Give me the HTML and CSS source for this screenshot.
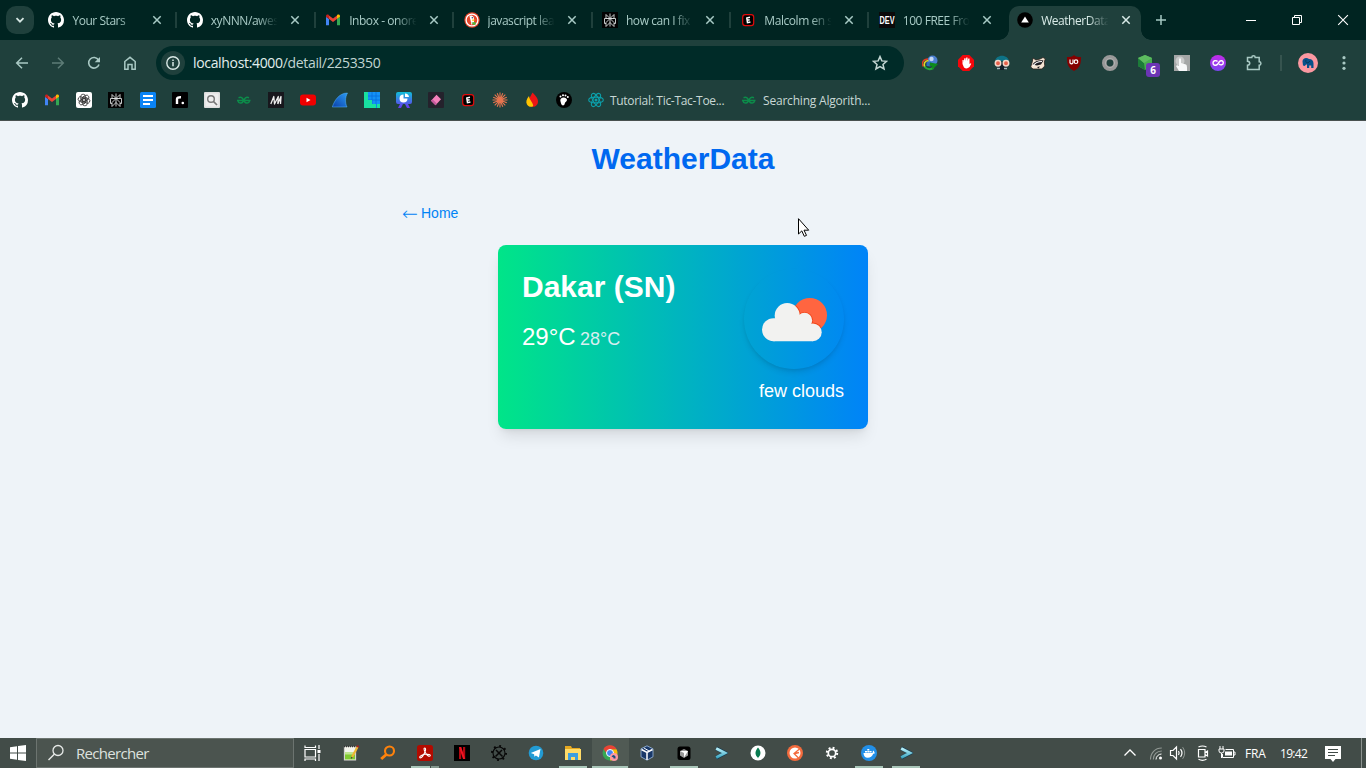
FILE: index.html
```html
<!DOCTYPE html>
<html lang="en">
<head>
<meta charset="utf-8">
<title>WeatherData</title>
<link rel="stylesheet" href="styles.css">
</head>
<body>
<svg class="defs" width="0" height="0">
  <defs>
    <linearGradient id="fin" x1="0" y1="1" x2="1" y2="0"><stop offset="0" stop-color="#0a3fa8"/><stop offset="1" stop-color="#2b9bf5"/></linearGradient>
    <linearGradient id="pie" x1="0" y1="0" x2="0" y2="1"><stop offset="0" stop-color="#10bfd8"/><stop offset="1" stop-color="#6a35f2"/></linearGradient>
    <linearGradient id="loop" x1="0" y1="0" x2="0" y2="1"><stop offset="0" stop-color="#c22be8"/><stop offset="1" stop-color="#7a46f0"/></linearGradient>
    <linearGradient id="prompt" x1="0" y1="0" x2="0" y2="1"><stop offset="0" stop-color="#b8f0fa"/><stop offset="1" stop-color="#3fa9c4"/></linearGradient>
  </defs>
  <symbol id="github" viewBox="0 0 16 16"><path fill="#fff" d="M8 0C3.58 0 0 3.58 0 8c0 3.54 2.29 6.53 5.47 7.59.4.07.55-.17.55-.38 0-.19-.01-.82-.01-1.49-2.01.37-2.53-.49-2.69-.94-.09-.23-.48-.94-.82-1.13-.28-.15-.68-.52-.01-.53.63-.01 1.08.58 1.23.82.72 1.21 1.87.87 2.33.66.07-.52.28-.87.51-1.07-1.78-.2-3.64-.89-3.64-3.95 0-.87.31-1.59.82-2.15-.08-.2-.36-1.02.08-2.12 0 0 .67-.21 2.2.82.64-.18 1.32-.27 2-.27s1.36.09 2 .27c1.53-1.04 2.2-.82 2.2-.82.44 1.1.16 1.92.08 2.12.51.56.82 1.27.82 2.15 0 3.07-1.87 3.75-3.65 3.95.29.25.54.73.54 1.48 0 1.07-.01 1.93-.01 2.2 0 .21.15.46.55.38A8.01 8.01 0 0 0 16 8c0-4.42-3.58-8-8-8z"/></symbol>
  <symbol id="gmail" viewBox="0 0 16 16"><path fill="#4285f4" d="M1 13.300h3V7L1 4.800z"/><path fill="#34a853" d="M12 13.300h3V4.800L12 7z"/><path fill="#ea4335" d="M4 7V3.500l4 3 4-3V7l-4 3z"/><path fill="#c5221f" d="M1 4.800V4c0-1.400 1.500-2 2.600-1.200l.4.400V7z"/><path fill="#fbbc04" d="M15 4.800V4c0-1.400-1.500-2-2.600-1.200l-.4.400V7z"/></symbol>
  <symbol id="perplex" viewBox="0 0 16 16"><path fill="#030303" d="M0 0h16v16H0z"/><path fill="none" stroke="#d9dcdc" stroke-width=".9" d="M8 1.500v13M4 2.500l4 4 4-4v4H4zM2.500 6.500h11v5H12M2.500 6.500v5H4M8 6.500l-4 4v4l4-4 4 4v-4z"/></symbol>
  <symbol id="duck" viewBox="0 0 16 16"><circle cx="8" cy="8" r="7.700" fill="#e5452a"/><circle cx="8" cy="8" r="5.900" fill="none" stroke="#fff" stroke-width="1.300"/><path fill="#fff" d="M5.500 4c2-1.500 4.500 0 4.500 3v3l-2.500 3-.8-4z"/><path fill="#fdc30a" d="M8 7.500l4 .3-3.500 1.500z"/><path fill="#4cba3c" d="M7.500 10.500l4-.5v3l-2.500-.5z"/><circle cx="8.300" cy="5.700" r=".7" fill="#24405f"/></symbol>
  <symbol id="esport" viewBox="0 0 16 16"><rect x="2.700" y="2.700" width="11" height="11" rx="2.600" fill="#000" stroke="#e00b0b" stroke-width="1.200"/><path fill="none" stroke="#fff" stroke-width="1.500" d="M10 5.300L6.800 6l.7 4.700 2.900-.6M7.200 8.300l2.500-.5"/></symbol>
  <symbol id="vercel" viewBox="0 0 16 16"><circle cx="8" cy="8" r="7.800" fill="#000"/><path fill="#fff" d="M8 4.500l3.800 6H4.200z"/></symbol>
  <symbol id="close" viewBox="0 0 16 16"><path fill="none" stroke="currentColor" stroke-width="1.500" d="M4.300 4.300l7.400 7.400m0-7.400l-7.400 7.400"/></symbol>
  <symbol id="openai" viewBox="0 0 16 16"><rect width="16" height="16" rx="2" fill="#fff"/><g fill="none" stroke="#333" stroke-width=".8"><rect x="4.800" y="2.200" width="4.600" height="8" rx="2.200"/><rect x="4.800" y="2.200" width="4.600" height="8" rx="2.200" transform="rotate(60 8 8)"/><rect x="4.800" y="2.200" width="4.600" height="8" rx="2.200" transform="rotate(120 8 8)"/><rect x="4.800" y="2.200" width="4.600" height="8" rx="2.200" transform="rotate(180 8 8)"/><rect x="4.800" y="2.200" width="4.600" height="8" rx="2.200" transform="rotate(240 8 8)"/><rect x="4.800" y="2.200" width="4.600" height="8" rx="2.200" transform="rotate(300 8 8)"/></g></symbol>
  <symbol id="doc" viewBox="0 0 16 16"><rect width="16" height="16" rx="1.500" fill="#0a84f5"/><path stroke="#fff" stroke-width="2" d="M3 4h10M3 8h10M3 12h7"/></symbol>
  <symbol id="rdot" viewBox="0 0 16 16"><rect width="16" height="16" rx="1" fill="#000"/><path fill="none" stroke="#fff" stroke-width="2.400" d="M5 12V7q0-2 4-1.800"/><circle cx="10.800" cy="11" r="1.300" fill="#fff"/></symbol>
  <symbol id="magnify" viewBox="0 0 16 16"><rect width="16" height="16" rx="1" fill="#dedede"/><rect x="1.500" y="1.500" width="13" height="13" fill="#eee"/><circle cx="7" cy="7" r="3.300" fill="none" stroke="#777" stroke-width="1.400"/><path stroke="#777" stroke-width="1.700" d="M9.500 9.500l3.500 3.500"/></symbol>
  <symbol id="gfg" viewBox="0 0 16 16"><path fill="none" stroke="#0c8c4a" stroke-width="1.500" d="M1 8.500h13.500M2.500 5.700c3-1 4.700.5 4.700 2.500 0 3.500-4.700 3.800-5.200.8M13 5.700c-3-1-4.700.5-4.700 2.500 0 3.500 4.700 3.800 5.200.8"/></symbol>
  <symbol id="mono" viewBox="0 0 16 16"><path fill="#17171d" d="M0 0h16v16H0z"/><path fill="none" stroke="#eee" stroke-width="1.300" stroke-linejoin="round" d="M2.800 12L5.800 4.500 6.500 12l3.800-7.500L9.800 12M9.800 12l3.200-7.500-.5 7.500"/></symbol>
  <symbol id="youtube" viewBox="0 0 16 16"><rect y="2.500" width="16" height="11" rx="3" fill="#f00000"/><path fill="#fff" d="M6.500 5.700v4.600l4-2.300z"/></symbol>
  <symbol id="shark" viewBox="0 0 16 16"><path fill="url(#fin)" stroke="#55b6ff" stroke-width=".5" d="M.3 15C2.500 8.500 7 1 15.500 1c-2.500 4.500-2.500 10-.5 14z"/></symbol>
  <symbol id="mosaic" viewBox="0 0 16 16"><path fill="#1492f5" d="M0 0h16v16H0z"/><path stroke="#056ddd" stroke-width=".8" d="M8 0v16M12 0v16M4 4h12M4 8h12"/><path fill="#18e0a0" d="M0 0h4v8h4v4h4v4H0zM13 12h3v4h-3z"/></symbol>
  <symbol id="piechart" viewBox="0 0 16 16"><path fill="url(#pie)" d="M2 0h12q2 0 2 2v8q0 2-2 2h-2l2 4h-3l-2-4H7l-2 4H2l2-4H2q-2 0-2-2V2q0-2 2-2z"/><path fill="#fff" d="M7.500 2.500v4h4a4 4 0 1 1-4-4zM9 1.500a4 4 0 0 1 4 3.500H9z"/></symbol>
  <symbol id="pinkbox" viewBox="0 0 16 16"><rect width="16" height="16" rx="1" fill="#24222c"/><path fill="#f480bb" d="M8.500 2.700L13 7.300 7.500 13.200 3 8.700z"/><path fill="#c4599c" d="M3 8.700l1.500-1.500 4.500 4.500-1.500 1.500z"/></symbol>
  <symbol id="claude" viewBox="0 0 16 16"><path stroke="#e8754f" stroke-width="1.100" d="M8 .5v15M.5 8h15M2.700 2.700l10.600 10.600M13.300 2.700L2.700 13.300M5.200 1.200l5.600 13.600M1.200 5.200l13.600 5.600M10.800 1.200L5.200 14.800M1.200 10.800l13.600-5.600"/></symbol>
  <symbol id="flame" viewBox="0 0 16 16"><path fill="#ed1515" d="M8.500.5C12 4 14 6.500 14 9.500c0 4-3.500 6-6.500 5L5 7z"/><path fill="#ffc400" d="M5 4C2.500 7 1.500 10 3 12.500s4.500 3 6.200 1.500C9 10 5.500 8.500 5 4z"/></symbol>
  <symbol id="foot" viewBox="0 0 16 16"><circle cx="8" cy="8" r="8" fill="#000"/><path fill="#fff" d="M5 6.500c2-2 6-1 6 1.300 0 2-2 2-2.300 4-.4 2.200-3.200 2.200-3.700-.5-.3-1.800-1.400-3.200 0-4.800z"/><g fill="#fff"><circle cx="4.500" cy="4.500" r="1"/><circle cx="7" cy="3.300" r="1"/><circle cx="9.500" cy="3.500" r="1"/><circle cx="11.800" cy="5" r="1"/></g></symbol>
  <symbol id="react" viewBox="0 0 16 16"><g fill="none" stroke="#0c9faa" stroke-width="1.100"><ellipse cx="8" cy="8" rx="7.300" ry="2.900"/><ellipse cx="8" cy="8" rx="7.300" ry="2.900" transform="rotate(60 8 8)"/><ellipse cx="8" cy="8" rx="7.300" ry="2.900" transform="rotate(120 8 8)"/></g><circle cx="8" cy="8" r="1.500" fill="#0c9faa"/></symbol>
  <symbol id="shell" viewBox="0 0 16 16"><path fill="none" stroke="#173d52" stroke-width="4.500" d="M2.500 2.500L13 8 2.500 13.500"/><path fill="none" stroke="url(#prompt)" stroke-width="3.300" d="M2.500 2.800L12.500 8l-10 5.200"/></symbol>
</svg>

<header class="browser">
  <div class="tabstrip">
    <button class="tab-search"><svg width="16" height="16" viewBox="0 0 16 16"><path fill="none" stroke="#d5e6e3" stroke-width="1.800" d="M4.500 6.200L8 9.700l3.500-3.500"/></svg></button>
    <div class="tabs">
      <div class="tab"><svg class="i16"><use href="#github"/></svg><span class="tab-title">Your Stars</span><svg class="i16"><use href="#close"/></svg></div>
      <div class="tab"><svg class="i16"><use href="#github"/></svg><span class="tab-title">xyNNN/awes</span><svg class="i16"><use href="#close"/></svg></div>
      <div class="tab"><svg class="i16"><use href="#gmail"/></svg><span class="tab-title">Inbox - onore</span><svg class="i16"><use href="#close"/></svg></div>
      <div class="tab"><svg class="i16"><use href="#duck"/></svg><span class="tab-title">javascript lea</span><svg class="i16"><use href="#close"/></svg></div>
      <div class="tab"><svg class="i16"><use href="#perplex"/></svg><span class="tab-title">how can I fix</span><svg class="i16"><use href="#close"/></svg></div>
      <div class="tab"><svg class="i16"><use href="#esport"/></svg><span class="tab-title">Malcolm en s</span><svg class="i16"><use href="#close"/></svg></div>
      <div class="tab no-sep"><svg class="i16" viewBox="0 0 16 16"><path fill="#0a0a0a" d="M0 0h16v16H0z"/><text x=".5" y="12" textLength="15" lengthAdjust="spacingAndGlyphs" font-family="Liberation Sans" font-weight="700" font-size="10.500" fill="#fff">DEV</text></svg><span class="tab-title">100 FREE Fro</span><svg class="i16"><use href="#close"/></svg></div>
      <div class="tab active"><svg class="i16"><use href="#vercel"/></svg><span class="tab-title">WeatherData</span><svg class="i16"><use href="#close"/></svg></div>
    </div>
    <svg class="new-tab" width="16" height="16" viewBox="0 0 16 16"><path stroke="#a5c9c4" stroke-width="1.500" d="M8 3v10M3 8h10"/></svg>
    <div class="window-controls">
      <svg width="46" height="40" viewBox="0 0 46 40"><path stroke="#fff" d="M18 20.500h10"/></svg>
      <svg width="46" height="40" viewBox="0 0 46 40"><path fill="none" stroke="#fff" d="M18.500 17.500h7v7h-7zM20.500 17.500v-2h7v7h-2"/></svg>
      <svg width="46" height="40" viewBox="0 0 46 40"><path stroke="#fff" stroke-width="1.100" d="M18.200 15.200l9.700 9.700m0-9.700l-9.700 9.700"/></svg>
    </div>
  </div>

  <div class="toolbar">
    <nav class="nav-buttons">
      <svg width="16" height="16" viewBox="0 0 16 16"><path fill="none" stroke="#a9c9c4" stroke-width="1.500" d="M14 8H3m5-5.300L2.700 8 8 13.300"/></svg>
      <svg width="16" height="16" viewBox="0 0 16 16"><path fill="none" stroke="#5d7c77" stroke-width="1.500" d="M2 8h11M8 2.700L13.300 8 8 13.300"/></svg>
      <svg width="16" height="16" viewBox="0 0 16 16"><path fill="none" stroke="#a9c9c4" stroke-width="1.600" d="M13 9.500A5.300 5.300 0 1 1 12.500 5"/><path fill="#a9c9c4" d="M14 2v5.300H8.700z"/></svg>
      <svg width="16" height="16" viewBox="0 0 16 16"><path fill="none" stroke="#a9c9c4" stroke-width="1.500" d="M2.800 6.500L8 2.300l5.200 4.200v7.700H10V9.500H6v4.700H2.800z"/></svg>
    </nav>
    <div class="omnibox">
      <span class="site-info"><svg width="16" height="16" viewBox="0 0 16 16"><circle cx="8" cy="8" r="6.200" fill="none" stroke="#d9e8e5" stroke-width="1.400"/><path stroke="#d9e8e5" stroke-width="1.500" d="M8 7v4.200M8 4.500V6"/></svg></span>
      <span class="url"><b>localhost:4000</b>/detail/2253350</span>
      <svg class="star" width="16" height="16" viewBox="0 0 16 16"><path fill="none" stroke="#c3d6d3" stroke-width="1.500" d="M8 1.600l1.850 4.300 4.700.4-3.550 3.100 1.060 4.600L8 11.550 3.940 14 5 9.400 1.450 6.300l4.700-.4z"/></svg>
    </div>
    <div class="extensions">
      <svg class="i16" viewBox="0 0 16 16"><circle cx="10.500" cy="5.500" r="5" fill="#4b7fd0"/><circle cx="9.500" cy="4" r="2.200" fill="#c3d8f5"/><path fill="none" stroke="#e33b22" stroke-width="1.400" d="M6 4C1 4-.5 8 1.200 11.500"/><path fill="none" stroke="#e0d52c" stroke-width="1.600" d="M6.500 5.500C2.500 5.500 1.500 9 2.800 12"/><path fill="none" stroke="#27a83a" stroke-width="2" d="M2.500 11.500c2.500 3.500 6 3 9 1.500"/><path fill="#2f6fc0" d="M4.500 7h5l-1 4.500-4-.5z"/><path fill="#0d8a1c" d="M8 7.500l8 1.500-5.500 5.500-.5-3-2.500-1z"/></svg>
      <svg class="i16" viewBox="0 0 16 16"><path fill="#f4060b" d="M4.700 0h6.600L16 4.700v6.600L11.300 16H4.700L0 11.300V4.700z"/><path fill="#fff" d="M4.500 5h1.200v2.500L6.300 3.300h1.300l.2 2.700.4-3.500h1.300L9.700 6l.6-2.500h1.200V9l1-.8.8.6-1.800 3.200q-2.700 2.500-5.500.5L4.500 9z"/></svg>
      <svg class="i16" viewBox="0 0 16 16"><path fill="#0d7286" d="M1 7C1-1.500 15-1.500 15 7l-7-1z"/><path fill="#131f29" d="M3 8h10v4l-2 3H5l-2-3z"/><circle cx="4" cy="8.200" r="2.700" fill="#e8604a" stroke="#f3d8cb" stroke-width="1.500"/><circle cx="12" cy="8.200" r="2.700" fill="#e8604a" stroke="#f3d8cb" stroke-width="1.500"/><path stroke="#a7bcc0" stroke-width="1.300" d="M3 13.500h3M10 13.500h3"/></svg>
      <svg class="i16" viewBox="0 0 16 16"><path fill="#f6e6d5" stroke="#2a211c" stroke-width=".8" d="M.7 12l1.500-5L3 3l3 2 4-1 3-1.500 2.300 1.300-1 3.200.5 4-3 3H3z"/><path fill="#1d1d22" d="M2.500 9.500C5 5.500 9 5 13.500 5.500L11 9.500l-4 1zM7 12l3-.5-1.500 2z"/><path fill="none" stroke="#fff" stroke-width="1.100" d="M3 11c2-3.500 5-4.500 9-4.500"/></svg>
      <svg class="i16" viewBox="0 0 16 16"><path fill="#850000" d="M8 0c2 2 4 2 7 2 0 7-1 11-7 14C2 13 1 9 1 2c3 0 5 0 7-2z"/><path fill="none" stroke="#fff" stroke-width="1.200" d="M4 4.500v3.300q1.500 2 3 0V4.500"/><circle cx="10" cy="6.700" r="1.800" fill="none" stroke="#fff" stroke-width="1.200"/></svg>
      <svg class="i16" viewBox="0 0 16 16"><circle cx="8" cy="8" r="5.700" fill="none" stroke="#999" stroke-width="4.600"/><circle cx="8" cy="8" r="4.600" fill="none" stroke="#b0b0b0"/></svg>
      <span class="badged"><svg class="i16" viewBox="0 0 16 16"><path fill="#47ad50" d="M7 0l7 3v8l-7 4-7-4V3z"/><path fill="#1c7b39" d="M0 3l6 5 1 7-7-4z"/><path fill="#5dbb60" d="M7 0l7 3-8 5-6-5z"/></svg><span class="badge">6</span></span>
      <svg class="i16" viewBox="0 0 16 16"><path fill="#a5a7a7" d="M0 0h16v16H0z"/><circle cx="6" cy="6" r="4.500" fill="#c9caca"/><path fill="#f8f9fa" d="M5 4q1-1.500 2 0v4l5 1.500q1 .5 1 3V16H5l-3-5q1-1.500 3 0z"/></svg>
      <svg class="i16" viewBox="0 0 16 16"><circle cx="8" cy="8" r="8" fill="url(#loop)"/><path fill="none" stroke="#fff" stroke-width="1.400" d="M7.500 6.500C6 4.800 3 5.700 3 8c0 2.500 3.200 3 4.500 1.300L9.500 6.500c1.300-1.500 3.800-.8 3.800 1.200 0 2.300-2.800 2.800-4.300 1.300"/></svg>
      <svg class="i16" viewBox="0 0 16 16"><path fill="none" stroke="#a9c9c4" stroke-width="1.500" d="M1.500 2.500h4.300c0-2.200 3.400-2.200 3.400 0h4v4.300c2.300 0 2.300 3.400 0 3.400v4.300H1.500v-4.200c3-.3 3-3.700 0-4z"/></svg>
    </div>
    <span class="divider"></span>
    <svg class="avatar" width="20" height="20" viewBox="0 0 20 20"><circle cx="10" cy="10" r="10" fill="#fb98a1"/><path fill="#07518a" d="M4.500 8.500C4.500 5 8.500 4 11 6c3 0 4.500 2 4.500 4.500V15h-2.300v-2.500h-2V15H9v-3.500c-1.500 0-1.500.5-2 1.500l-2-.5z"/><path fill="none" stroke="#083657" d="M8 7c-1 3 2 4 4 1"/></svg>
    <svg class="menu" width="16" height="16" viewBox="0 0 16 16"><g fill="#a9c9c4"><circle cx="8" cy="2.700" r="1.600"/><circle cx="8" cy="8" r="1.600"/><circle cx="8" cy="13.300" r="1.600"/></g></svg>
  </div>

  <div class="bookmarks">
    <svg class="i16"><use href="#github"/></svg>
    <svg class="i16"><use href="#gmail"/></svg>
    <svg class="i16"><use href="#openai"/></svg>
    <svg class="i16"><use href="#perplex"/></svg>
    <svg class="i16"><use href="#doc"/></svg>
    <svg class="i16"><use href="#rdot"/></svg>
    <svg class="i16"><use href="#magnify"/></svg>
    <svg class="i16"><use href="#gfg"/></svg>
    <svg class="i16"><use href="#mono"/></svg>
    <svg class="i16"><use href="#youtube"/></svg>
    <svg class="i16"><use href="#shark"/></svg>
    <svg class="i16"><use href="#mosaic"/></svg>
    <svg class="i16"><use href="#piechart"/></svg>
    <svg class="i16"><use href="#pinkbox"/></svg>
    <svg class="i16"><use href="#esport"/></svg>
    <svg class="i16"><use href="#claude"/></svg>
    <svg class="i16"><use href="#flame"/></svg>
    <svg class="i16"><use href="#foot"/></svg>
    <span class="bookmark first"><svg class="i16"><use href="#react"/></svg><span>Tutorial: Tic-Tac-Toe...</span></span>
    <span class="bookmark second"><svg class="i16"><use href="#gfg"/></svg><span>Searching Algorith...</span></span>
  </div>
</header>

<main class="page">
  <h1 class="brand">WeatherData</h1>
  <div class="container">
    <a class="home"><span class="arrow">←</span>Home</a>
    <section class="card">
      <div>
        <h2 class="city">Dakar (SN)</h2>
        <p class="temps"><span class="temp">29°C</span> <span class="feels">28°C</span></p>
      </div>
      <div class="conditions">
        <svg class="weather" width="100" height="100" viewBox="0 0 100 100">
          <clipPath id="sun"><circle cx="65.800" cy="46.200" r="17.200"/></clipPath>
          <circle cx="65.800" cy="46.200" r="17.200" fill="#ff6540"/>
          <g clip-path="url(#sun)" fill="#f04418"><circle cx="43.200" cy="46.500" r="13.400"/><circle cx="60.500" cy="51.500" r="8.600"/><circle cx="68.700" cy="63.200" r="9.800"/></g>
          <g fill="#f2f2f0">
            <circle cx="29.500" cy="60.700" r="11.500"/><circle cx="43.200" cy="46.500" r="12.500"/><circle cx="60.500" cy="51.500" r="7.700"/><circle cx="68.800" cy="63.300" r="8.900"/>
            <path d="M29.500 50l6-2 19-2 12 10 2.300 16.200H29.500z"/>
          </g>
        </svg>
        <p class="description">few clouds</p>
      </div>
    </section>
  </div>
</main>

<footer class="taskbar">
  <div class="start"><svg width="16" height="16" viewBox="0 0 16 16"><path fill="#fff" d="M0 2.200L7 1.200v6.300H0zM8 1.100L16 0v7.500H8zM0 8.500h7v6.300l-7-1zM8 8.500h8V16l-8-1.100z"/></svg></div>
  <div class="search"><svg width="18" height="18" viewBox="0 0 18 18"><circle cx="11" cy="6.500" r="5" fill="none" stroke="#e7eae8" stroke-width="1.300"/><path stroke="#e7eae8" stroke-width="1.400" d="M7.500 10L1.500 16"/></svg><span>Rechercher</span></div>
  <div class="task view"><svg width="17" height="17" viewBox="0 0 17 17"><path fill="none" stroke="#fff" stroke-width="1.200" d="M1 4.500h10.500v7.500H1zM1 .5v2h10.500v-2M1 16v-2h10.500v2M15 0v4M15 9v7"/><path fill="#fff" d="M13.500 5h3v3h-3z"/></svg></div>
  <div class="task"><svg class="i16" viewBox="0 0 16 16"><path fill="#f3f5ed" stroke="#888" stroke-width=".6" d="M1 1.500h12v14H1z"/><path fill="#80ca31" d="M2 8h10v6.500H2z"/><path fill="#bfe58f" d="M2 7h10v2.500H2z"/><path stroke="#333" stroke-width="1.500" stroke-dasharray="1 1" d="M1 1.500h12"/><path stroke="#eeb632" stroke-width="2.200" d="M14.500 2L9 12"/><path stroke="#a52220" stroke-width="2.400" d="M15.300.6l-.9 1.600"/><path stroke="#444" stroke-width="1.300" d="M9 12l-.8 1.500"/></svg></div>
  <div class="task"><svg class="i16" viewBox="0 0 16 16"><circle cx="9.500" cy="6" r="4.500" fill="none" stroke="#ff820c" stroke-width="2.100"/><path stroke="#ff820c" stroke-width="3" d="M6.300 9.500L1.200 14"/></svg></div>
  <div class="task open split"><svg class="i16" viewBox="0 0 16 16"><rect width="16" height="16" rx="2.500" fill="#b30b00"/><path fill="none" stroke="#fff" stroke-width="1.100" d="M7.700 3c1.500 0 1 3.500-1 6.500-1.500 3-3.500 4-4 3-.5-1.500 3-3 6-3.200 3-.2 5 .2 4.500 1.500-.7 1.500-3.500-.5-5-3.500C6.900 5 6.700 3 7.700 3z"/></svg></div>
  <div class="task"><svg class="i16" viewBox="0 0 16 16"><path fill="#000" d="M0 0h16v16H0z"/><path fill="#b40710" d="M5 2h2.200v12H5zM9 2h2.200v12H9z"/><path fill="#f01422" d="M5 2h2.200l4 12H9z"/></svg></div>
  <div class="task"><svg class="i16" viewBox="0 0 16 16"><circle cx="8" cy="8" r="6" fill="none" stroke="#080808" stroke-width="1.100"/><circle cx="8" cy="8" r="7" fill="none" stroke="#080808" stroke-width="2" stroke-dasharray="1.800 3.700"/><path stroke="#080808" stroke-width="1.500" d="M5 5l6.500 6.500M11 5l-6.500 6.500"/></svg></div>
  <div class="task"><svg class="i16" viewBox="0 0 16 16"><circle cx="8" cy="8" r="7.300" fill="#229bd4"/><path fill="#fff" d="M2.800 8l9.700-4-1.600 8.500-3-2-1.500 1.300-.3-2.500z"/></svg></div>
  <div class="task open"><svg class="i16" viewBox="0 0 16 16"><path fill="#e5a821" d="M0 1h6l1 2h8v4H0z"/><path fill="#ffdb68" d="M0 4h16v11H0z"/><path fill="#3c9ee0" d="M3 8h10v7h-3v-3H6v3H3z"/></svg></div>
  <div class="task open focused"><svg class="i16" viewBox="0 0 16 16"><circle cx="8" cy="8" r="7.500" fill="#35a753"/><path fill="#fbbc05" d="M8 15.500A7.500 7.500 0 0 0 14.500 4.300H8v4z"/><path fill="#ea4335" d="M1.500 4A7.500 7.500 0 0 1 14.600 4.300H8L5 9z"/><circle cx="8" cy="8" r="3.500" fill="#4285f4" stroke="#fff"/><circle cx="12" cy="12" r="4" fill="#fb98a1"/><path fill="#164f80" d="M9.500 11.500q2-3 4 0v2h-2v-1z"/></svg></div>
  <div class="task"><svg class="i16" viewBox="0 0 16 16"><path fill="#193868" stroke="#9cbbe1" stroke-width=".8" d="M8 .8l6 3v8L8 15.200l-6-3.400v-8z"/><path fill="none" stroke="#fff" stroke-width="1.500" d="M2.500 4.500L8 7.500l5.500-3M8 7.500V15"/><path stroke="#fff" d="M5 3l5 3"/></svg></div>
  <div class="task open"><svg class="i16" viewBox="0 0 16 16"><rect x="1.500" y="1.500" width="13" height="13.500" rx="2.500" fill="#000"/><path fill="#999" d="M8 4l4 2v4.500L8 13l-4-2.500V6z"/><path fill="#fff" d="M4 6h8l-4 6.500V8z"/></svg></div>
  <div class="task"><svg class="i16 small"><use href="#shell"/></svg></div>
  <div class="task"><svg class="i16" viewBox="0 0 16 16"><circle cx="8" cy="8" r="7.500" fill="#fff"/><path fill="#087b50" d="M8 2.500c3.500 4 3 7.500.3 10l-.3 1-.3-1C5 10 4.500 6.500 8 2.500z"/></svg></div>
  <div class="task"><svg class="i16" viewBox="0 0 16 16"><circle cx="8" cy="8" r="8" fill="#f36b3d"/><circle cx="8" cy="8" r="5.500" fill="#fff"/><path fill="none" stroke="#f36b3d" stroke-width="1.300" d="M12.500 4L7 8.500 11.500 13M8 8.500l4-1"/></svg></div>
  <div class="task"><svg class="i16" viewBox="0 0 16 16"><circle cx="8" cy="8" r="3.700" fill="none" stroke="#fff" stroke-width="1.700"/><circle cx="8" cy="8" r="5.200" fill="none" stroke="#fff" stroke-width="2" stroke-dasharray="1.900 2.184"/></svg></div>
  <div class="task open"><svg class="i16" viewBox="0 0 16 16"><circle cx="8" cy="8" r="8" fill="#228fe8"/><path fill="#fff" d="M2.500 8h9q0-2 1-2.500 1 1 .7 2l1 .3q-.7 1-2 .9-1.500 4-5.500 4-4 0-4.200-4.700zM4 6h2v1.600H4zM6.300 6h2v1.600h-2zM8.600 6h2v1.600h-2zM6.300 4h2v1.600h-2z"/></svg></div>
  <div class="task open"><svg class="i16 small"><use href="#shell"/></svg></div>
  <div class="tray">
    <svg class="t-up" width="14" height="14" viewBox="0 0 14 14"><path fill="none" stroke="#fff" stroke-width="1.300" d="M1.500 9.500L7 4l5.500 5.500"/></svg>
    <svg class="t-wifi" width="14" height="14" viewBox="0 0 14 14"><g fill="none" stroke="#929995" stroke-width="1.100"><path d="M1.500 13.500C1.500 7 6 2 12.800 2M4.300 13.500c0-5 3.500-8.500 8.500-8.500"/></g><path fill="none" stroke="#fff" d="M7 13.500c0-3 2.500-5.500 5.500-5.500"/><circle cx="11.500" cy="12" r="1.500" fill="#fff"/></svg>
    <svg class="t-volume" width="18" height="16" viewBox="0 0 18 16"><path fill="none" stroke="#fff" stroke-width="1.200" d="M1.500 5.500H4l3.500-3.500v12L4 10.500H1.500zM9.500 6q1.300 2 0 4M11.500 4.200q3 3.800 0 7.600"/><path fill="none" stroke="#929995" d="M13.700 2.200q4 5.800 0 11.600"/></svg>
    <svg class="t-cam" width="14" height="16" viewBox="0 0 14 16"><path fill="none" stroke="#fff" stroke-width="1.200" d="M2.500 4.500H9v7.500H2.500zM9 7.500L11.500 6v5L9 9.500M2.500 2q4-2 8 0M2.500 14.300q4 2 8 0"/></svg>
    <svg class="t-bat" width="18" height="14" viewBox="0 0 18 14"><path fill="#fff" d="M7 5.500h7v4H7z"/><path fill="none" stroke="#fff" d="M7.500 3.500h8v8h-11V8M15.500 6h1.500v3h-1.500M2 0v3M5 0v3M1 3h5v2q0 2-2.500 2T1 5zM3.500 7v5"/></svg>
    <span class="lang">FRA</span>
    <span class="clock">19:42</span>
    <svg class="t-note" width="16" height="16" viewBox="0 0 16 16"><path fill="#fff" d="M0 0h16v13h-5.500L8 16l-2.500-3H0z"/><path stroke="#414b47" d="M3 3.500h10M3 6.500h10M3 9.500h7"/></svg>
    <span class="peek"></span>
  </div>
</footer>

<svg class="cursor" width="13" height="20" viewBox="0 0 13 20"><path fill="#fff" stroke="#000" d="M1.500 1.700v15.300l3.300-3.100 2.500 5.400 2.200-.9L7 13.200h4.700z"/></svg>
</body>
</html>
```
FILE: styles.css
```css
* { box-sizing: border-box; }
body {
  margin: 0;
  width: 1366px;
  height: 768px;
  overflow: hidden;
  display: flex;
  flex-direction: column;
  background: #eef3f8;
  font-family: "Liberation Sans", Arial, sans-serif;
}
svg { display: block; flex: none; }
.defs { position: absolute; }
h1, h2, p { margin: 0; }
.i16 { width: 16px; height: 16px; flex: none; }

.browser {
  height: 121px;
  flex: none;
  background: #1f403c;
  border-bottom: 1px solid #48504f;
  font-family: "Open Sans", "Noto Sans", sans-serif;
}
.tabstrip {
  height: 40px;
  display: flex;
  align-items: center;
  padding-left: 6px;
  background: #002421;
}
.tab-search {
  width: 28px;
  height: 28px;
  padding: 0;
  border: 0;
  border-radius: 10px;
  background: #1f403c;
  display: grid;
  place-items: center;
}
.tabs { display: flex; margin-left: 4px; height: 40px; }
.tab {
  position: relative;
  width: 138.400px;
  height: 40px;
  padding: 0 11.500px 0 10.400px;
  display: flex;
  align-items: center;
  color: #a8cbc6;
}
.tab::after {
  content: "";
  position: absolute;
  right: -1px;
  top: 12px;
  width: 2px;
  height: 16px;
  background: #1f403c;
}
.tab.no-sep::after { display: none; }
.tab-title {
  margin: 0 8px;
  width: 69px;
  white-space: nowrap;
  font-size: 12px;
  letter-spacing: -0.450px;
  -webkit-mask-image: linear-gradient(to right, #000 68%, transparent 98%);
  mask-image: linear-gradient(to right, #000 68%, transparent 98%);
}
.tab > svg:last-child { margin-left: auto; }
.tab.active { color: #d9ebe8; }
.tab.active::before {
  content: "";
  position: absolute;
  z-index: 0;
  left: 2px;
  right: 4px;
  top: 6px;
  bottom: 0;
  background: #1f403c;
  border-radius: 10px 10px 0 0;
}
.tab.active > * { position: relative; z-index: 1; }
.tab.active::after {
  left: -8px;
  right: -6px;
  top: 30px;
  width: auto;
  height: 10px;
  background:
    radial-gradient(circle at 0 0, transparent 9.500px, #1f403c 10px) left / 10px 10px no-repeat,
    radial-gradient(circle at 100% 0, transparent 9.500px, #1f403c 10px) right / 10px 10px no-repeat;
}
.new-tab { margin-left: 8px; }
.window-controls { margin-left: auto; display: flex; }

.toolbar { height: 46px; display: flex; align-items: center; }
.nav-buttons { flex: none; display: flex; gap: 20px; padding-left: 14px; width: 156px; }
.omnibox {
  flex: none;
  width: 748px;
  height: 34px;
  padding: 0 16px 0 5px;
  border-radius: 17px;
  background: #002b28;
  display: flex;
  align-items: center;
}
.site-info {
  width: 24px;
  height: 24px;
  border-radius: 50%;
  background: #1f403c;
  display: grid;
  place-items: center;
}
.url { margin-left: 8px; padding-bottom: 1px; font-size: 14px; letter-spacing: -0.330px; color: #c0d5d2; }
.url b { font-weight: 400; color: #e3efed; }
.star { margin-left: auto; }
.extensions { display: flex; gap: 20px; margin-left: 18px; }
.badged { position: relative; }
.badge {
  position: absolute;
  left: 8px;
  top: 8px;
  width: 14px;
  height: 14px;
  border-radius: 3px;
  background: #6c35b5;
  color: #fff;
  font-size: 10px;
  font-weight: 700;
  line-height: 14px;
  text-align: center;
}
.divider { flex: none; width: 2px; height: 16px; margin: 0 16px 0 18px; background: #36544f; }
.avatar { margin-right: 18px; }

.bookmarks {
  height: 28px;
  padding-left: 12px;
  display: flex;
  align-items: center;
  gap: 16px;
  color: #c8d8d5;
  font-size: 12px;
  letter-spacing: -0.300px;
}
.bookmark { display: flex; align-items: center; gap: 6px; white-space: nowrap; }
.bookmark.first { width: 137px; }
.bookmark.second { letter-spacing: -0.200px; }

.page { flex: 1; padding-top: 20px; }
.brand {
  text-align: center;
  font-size: 30px;
  line-height: 36px;
  color: #0068f0;
}
.container { width: 560px; margin: 26px auto 0; }
.home { display: flex; font-size: 14px; line-height: 20px; color: #0083f5; }
.arrow {
  width: 18px;
  margin-left: -1px;
  margin-right: 1px;
  font-family: "DejaVu Sans", sans-serif;
  font-size: 19px;
  font-weight: 200;
}
.card {
  width: 370px;
  margin: 22px auto 0;
  padding: 24px;
  border-radius: 8px;
  background: linear-gradient(to right, #00e588, #0083f8);
  box-shadow: 0 10px 15px -3px rgba(0, 0, 0, .1), 0 4px 6px -4px rgba(0, 0, 0, .1);
  color: #fff;
  display: flex;
  justify-content: space-between;
}
.city { font-size: 30px; line-height: 36px; }
.temps { margin-top: 16px; font-size: 16px; line-height: 32px; }
.temp { font-size: 24px; }
.feels { font-size: 18px; color: #d9eef0; }
.conditions { display: flex; flex-direction: column; align-items: flex-end; }
.weather {
  border-radius: 50%;
  box-shadow: 0 4px 6px -1px rgba(0, 0, 0, .1), 0 2px 4px -2px rgba(0, 0, 0, .1);
}
.description { margin-top: 8px; font-size: 18px; line-height: 28px; }

.taskbar {
  height: 30px;
  flex: none;
  display: flex;
  background: #424c48;
  color: #fff;
  font-family: "Open Sans", "Noto Sans", sans-serif;
}
.start { width: 36px; display: grid; place-items: center; }
.search {
  width: 258px;
  border: 1px solid #6c7470;
  background: #4b544f;
  display: flex;
  align-items: center;
  padding-left: 10px;
  gap: 11px;
  font-size: 15px;
  letter-spacing: -0.700px;
  color: #dde1df;
}
.task {
  width: 37px;
  position: relative;
  display: grid;
  place-items: center;
}
.task.view { width: 38.500px; padding-right: 2px; }
.task .small { width: 14px; height: 14px; }
.task.open::after {
  content: "";
  position: absolute;
  left: 4.500px;
  width: 28px;
  bottom: 0;
  height: 2px;
  background: #a9c6b9;
}
.task.split::after { background: linear-gradient(to right, #a9c6b9 19px, #424c48 19px 20px, #84978e 20px); }
.task.focused { background: #505a54; }
.task.focused::after { left: 0.500px; width: 36px; }
.tray { margin-left: auto; display: flex; align-items: center; font-size: 12px; }
.t-wifi { margin-left: 12px; }
.t-volume { margin-left: 6px; }
.t-cam { margin-left: 9px; }
.t-bat { margin-left: 8px; }
.lang { width: 22px; margin-left: 9px; letter-spacing: -0.200px; }
.clock { width: 28px; margin-left: 13px; letter-spacing: -0.700px; }
.t-note { margin-left: 17px; margin-top: 2px; }
.peek { width: 1px; height: 30px; margin: 0 4px 0 20px; background: #8b928f; }

.cursor { position: absolute; left: 797px; top: 217px; }
```
